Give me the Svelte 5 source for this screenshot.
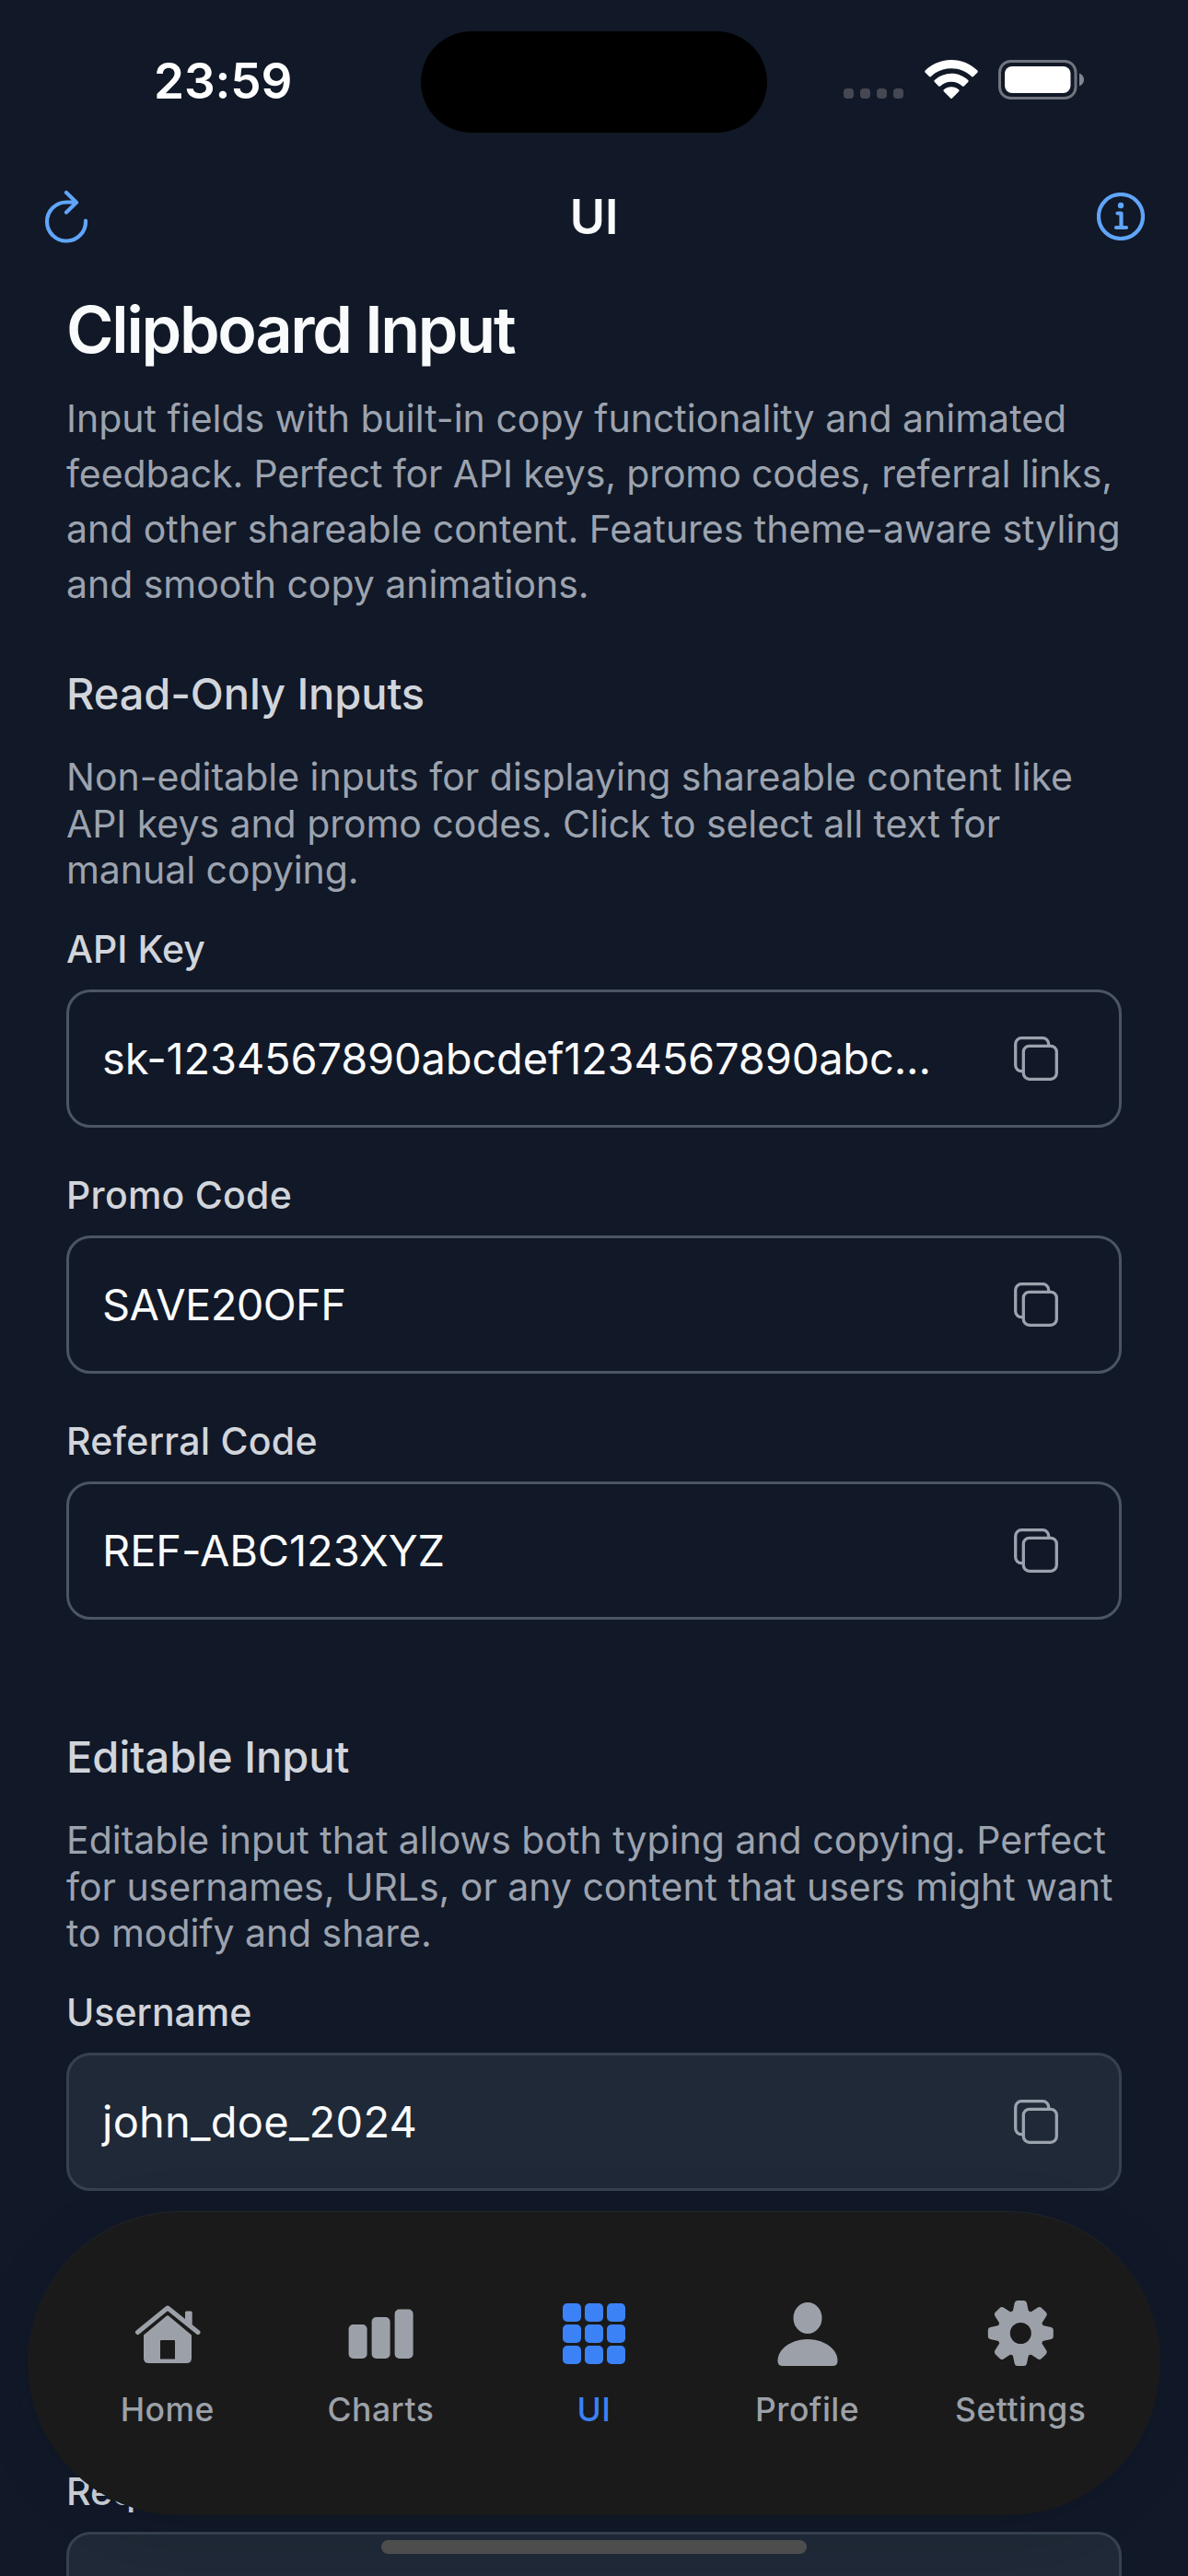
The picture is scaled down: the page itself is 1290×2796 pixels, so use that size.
<script>
  const keys = [
    { label: 'API Key', value: 'sk-1234567890abcdef1234567890abc...', cls: 'key' },
    { label: 'Promo Code', value: 'SAVE20OFF', cls: 'promo' },
    { label: 'Referral Code', value: 'REF-ABC123XYZ', cls: 'ref' }
  ];
  const editable = { label: 'Username', value: 'john_doe_2024', cls: 'user' };
  const required = { label: 'Required Input', value: '', cls: 'empty' };
  const tabs = ['Home', 'Charts', 'UI', 'Profile', 'Settings'];
  const cells = [0, 1, 2, 3, 4, 5, 6, 7, 8];
  const teeth = [0, 45, 90, 135, 180, 225, 270, 315];
</script>

{#snippet field(f, filled)}
  <div class="field">
    <div class="label {f.cls}">{f.label}</div>
    <div class="box" class:filled>
      <span class="value {f.cls}">{f.value}</span>
      <svg class="copy" viewBox="0 0 48 48" width="48" height="48">
        <rect x="1.700" y="1.700" width="36" height="36" rx="6.500" />
        <rect class="front" x="10.300" y="10.300" width="36" height="36" rx="6.500" />
      </svg>
    </div>
  </div>
{/snippet}

<div class="screen">
  <header class="status">
    <div class="time">23:59</div>
    <div class="island"></div>
    <div class="indicators">
      <div class="dots"><i></i><i></i><i></i><i></i></div>
      <svg class="wifi" viewBox="0 0 58 43" width="58" height="43">
        <path d="M29 0C40 0 50 4.400 57.300 11.500Q58.300 12.700 57.300 13.700L53 18Q52 18.900 51 17.900C45 12.300 37.500 9.200 29 9.200S13 12.300 7 17.900Q6 18.900 5 18L.7 13.700Q-.3 12.700 .7 11.500C8 4.400 18 0 29 0Z" />
        <path d="M29 14.800C36 14.800 42.300 17.500 47.200 22Q48.200 23 47.200 24L42.900 28.400Q41.900 29.300 40.900 28.400C37.700 25.500 33.600 23.800 29 23.800S20.300 25.500 17.100 28.400Q16.100 29.300 15.100 28.400L10.800 24Q9.800 23 10.800 22C15.700 17.500 22 14.800 29 14.800Z" />
        <path d="M29 29.300C32 29.300 34.900 30.400 37.100 32.200Q38.200 33.200 37.200 34.200L30 41.500Q29 42.500 28 41.500L20.800 34.200Q19.800 33.200 20.900 32.200C23.100 30.400 26 29.300 29 29.300Z" />
      </svg>
      <svg class="battery" viewBox="0 0 94 43" width="94" height="43">
        <rect x="1.500" y="1.500" width="82.500" height="40" rx="12" fill="none" stroke="#fff" stroke-opacity=".4" stroke-width="3" />
        <rect x="7" y="7" width="71.500" height="29" rx="8" fill="#fff" />
        <path d="M88 14.500C91.500 16 93 18.500 93 21.500S91.500 27 88 28.500Z" fill="#fff" fill-opacity=".48" />
      </svg>
    </div>
  </header>

  <div class="topbar">
    <svg viewBox="0 0 50 58" width="50" height="58" class="line-icon">
      <path d="M46 33.500A21 21 0 1 1 25 13.500H35M25 3L36 13.700 25 24.500" />
    </svg>
    <h1>UI</h1>
    <svg viewBox="0 0 52 52" width="52" height="52" class="line-icon">
      <circle cx="26" cy="26" r="24" />
      <circle class="solid" cx="26" cy="14" r="3.200" />
      <path d="M22.500 22.500H26.500V38M21 38H32" />
    </svg>
  </div>

  <main>
    <h2>Clipboard Input</h2>
    <div class="intro">
      <div>Input fields with built-in copy functionality and animated</div>
      <div class="i2">feedback. Perfect for API keys, promo codes, referral links,</div>
      <div class="i3">and other shareable content. Features theme-aware styling</div>
      <div class="i3">and smooth copy animations.</div>
    </div>

    <h3>Read-Only Inputs</h3>
    <div class="desc">
      <div>Non-editable inputs for displaying shareable content like</div>
      <div class="d2">API keys and promo codes. Click to select all text for</div>
      <div class="d2">manual copying.</div>
    </div>
    {#each keys as f}{@render field(f, false)}{/each}

    <h3 class="second">Editable Input</h3>
    <div class="desc">
      <div>Editable input that allows both typing and copying. Perfect</div>
      <div class="i3">for usernames, URLs, or any content that users might want</div>
      <div class="d2">to modify and share.</div>
    </div>
    {@render field(editable, true)}
    <div class="after">{@render field(required, true)}</div>
  </main>

  <nav>
    {#each tabs as tab}
      <div class="tab" class:active={tab === 'UI'}>
        <svg viewBox="0 0 72 72" width="72" height="72">
          {#if tab === 'Home'}
            <path class="roof" d="M3.500 35.500L36 9 69 35.500" />
            <path d="M55 14Q55 12.500 56.500 12.500H61.200Q62.700 12.500 62.700 14V31L55 25Z" />
            <path fill-rule="evenodd" d="M34.800 17.800Q36 16.800 37.200 17.800L62 38.500V63.500Q62 69 56.500 69H15.500Q10 69 10 63.500V38.500ZM29 44Q28 44 28 45V64.500H44V45Q44 44 43 44Z" />
          {:else if tab === 'Charts'}
            <rect x="1.600" y="27" width="20" height="37" rx="5" />
            <rect x="26.600" y="19" width="20" height="45" rx="5" />
            <rect x="51.600" y="10.500" width="20" height="53.500" rx="5" />
          {:else if tab === 'UI'}
            {#each cells as c}
              <rect x={2 + (c % 3) * 24} y={4 + Math.floor(c / 3) * 23} width="20" height="20" rx="5" />
            {/each}
          {:else if tab === 'Profile'}
            <ellipse cx="36" cy="20" rx="15.500" ry="17" />
            <path d="M36 43C53 43 68.500 53 68.500 66.500Q68.500 72 63 72H9Q3.500 72 3.500 66.500C3.500 53 19 43 36 43Z" />
          {:else}
            <g>
              {#each teeth as t}
                <path transform="rotate({t} 36.300 36.500)" d="M26 15Q27.500 13.500 28 11.500L29.700 3.500Q30.300 1 32.800 1H39.800Q42.300 1 42.900 3.500L44.600 11.500Q45 13.500 46.600 15Z" />
              {/each}
            </g>
            <circle class="ring" cx="36.300" cy="36.500" r="18.500" />
          {/if}
        </svg>
        <span>{tab}</span>
      </div>
    {/each}
  </nav>
  <div class="home-bar"></div>
</div>

<style>
  :global(body) { margin: 0; background: #111827; }
  .screen {
    position: relative; width: 1290px; height: 2796px; overflow: hidden;
    background: #111827; color: #f9fafb; font-family: Inter, "Liberation Sans", sans-serif;
    font-feature-settings: "calt" 0;
  }
  .status { height: 178px; display: grid; grid-template-columns: 457px 376px 457px; align-items: start; }
  .time { padding: 56px 0 0 167px; font-size: 53px; line-height: 64px; font-weight: 600; color: #fff; letter-spacing: -.1px; }
  .island { margin-top: 34px; height: 110px; border-radius: 55px; background: #000; }
  .indicators { display: flex; align-items: flex-start; padding: 65px 0 0 83px; }
  .dots { display: flex; gap: 7px; padding-top: 31px; margin-right: 23px; }
  .dots i { width: 11px; height: 11px; border-radius: 4px; background: #454852; }
  .wifi { fill: #fff; margin-right: 22px; }
  .topbar { height: 114px; display: grid; grid-template-columns: 1fr 200px 1fr; align-items: center; padding: 0 47px; }
  .topbar svg:last-child { justify-self: end; }
  h1, h2, h3 { margin: 0; }
  h1 { text-align: center; font-size: 52px; line-height: 60px; padding-top: 2px; font-weight: 600; }
  .line-icon { fill: none; stroke: #60a5fa; stroke-width: 4.200; stroke-linecap: round; stroke-linejoin: round; }
  .line-icon .solid { fill: #60a5fa; stroke: none; }
  main { padding: 26px 72px 0; white-space: nowrap; }
  h2 { font-size: 70px; line-height: 80px; font-weight: 600; letter-spacing: -2.250px; }
  .intro { margin-top: 26px; font-size: 41px; line-height: 60px; color: #9ca3af; }
  .i2 { letter-spacing: -.12px; }
  .i3 { letter-spacing: -.03px; }
  .d2 { letter-spacing: -.05px; }
  h3 { margin-top: 59px; font-size: 47px; line-height: 60px; font-weight: 500; letter-spacing: -.1px; color: #d1d5db; }
  .desc { height: 152px; margin-top: 35px; font-size: 41px; line-height: 50.600px; color: #9ca3af; }
  .field { height: 267px; }
  .label { padding-top: 35px; font-size: 41px; line-height: 50px; font-weight: 500; color: #d1d5db; }
  .label.promo, .label.ref { letter-spacing: .25px; }
  .box {
    box-sizing: border-box; height: 150px; margin-top: 19px; border: 3px solid #4b5563; border-radius: 26px;
    display: flex; align-items: center; justify-content: space-between; padding: 0 66px 0 36px;
    font-size: 47px;
  }
  .value { padding-bottom: 2px; }
  .value.key { letter-spacing: -.17px; }
  .value.promo { letter-spacing: -.6px; }
  .value.ref { letter-spacing: -.1px; }
  .value.user { letter-spacing: .25px; }
  .filled { background: #1f2937; border-color: #374151; }
  .copy { fill: none; stroke: #9ca3af; stroke-width: 3.300; }
  .copy .front { fill: #111827; }
  .filled .front { fill: #1f2937; }
  h3.second { margin-top: 106px; letter-spacing: 0; }
  .after { margin-top: 253px; }
  nav {
    position: absolute; left: 30px; top: 2400px; width: 1230px; height: 330px; box-sizing: border-box;
    border-radius: 165px; background: #1a1a1a; box-shadow: 0 8px 60px rgba(4, 18, 34, .14);
    border-top: 1px solid #25242a; padding: 95px 36px 0; display: grid; grid-template-columns: repeat(5, 1fr);
  }
  .tab { display: flex; flex-direction: column; align-items: center; color: #9ca1a9; }
  .tab svg { fill: #9ca1a9; }
  .tab.active, .tab.active svg { color: #3b82f6; fill: #3b82f6; }
  .tab span { margin-top: 24px; font-size: 35.500px; line-height: 48px; font-weight: 500; letter-spacing: .5px; }
  .roof { fill: none; stroke: #9ca1a9; stroke-width: 5; stroke-linecap: round; stroke-linejoin: round; }
  .ring { fill: none; stroke: #9ca1a9; stroke-width: 14; }
  .home-bar { position: absolute; left: 414px; top: 2757px; width: 462px; height: 15px; border-radius: 8px; background: #4d4d4d; }
</style>
